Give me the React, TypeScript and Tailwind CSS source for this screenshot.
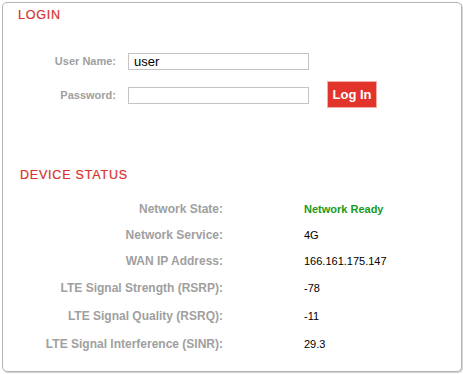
import React from "react";

const rows: { label: string; value: string; green?: boolean; h: number }[] = [
  { label: "Network State:", value: "Network Ready", green: true, h: 26 },
  { label: "Network Service:", value: "4G", h: 26 },
  { label: "WAN IP Address:", value: "166.161.175.147", h: 26 },
  { label: "LTE Signal Strength (RSRP):", value: "-78", h: 28 },
  { label: "LTE Signal Quality (RSRQ):", value: "-11", h: 28 },
  { label: "LTE Signal Interference (SINR):", value: "29.3", h: 28 },
];

export default function App() {
  return (
    <div
      className="w-[463px] h-[374px] bg-white overflow-hidden"
      style={{ fontFamily: '"Liberation Sans", Arial, sans-serif' }}
    >
      <div className="ml-[2px] mt-[2px] w-[460px] h-[370px] border border-[#b4b4b4] rounded-[5px] shadow-[1px_1px_1px_#d0d0d0] bg-white">
        <div className="pl-[15px] pt-[5px] h-[20px] text-[12.5px] leading-[14px] tracking-[0.8px] text-[#d8302a] [-webkit-text-stroke:0.2px_#d8302a]">
          LOGIN
        </div>
        <div className="mt-[30px] flex items-start">
          <div className="flex flex-col">
            <div className="flex items-center h-[17px]">
              <div className="w-[113px] text-right text-[11px] font-bold text-[#a0a0a0]">User Name:</div>
              <div className="ml-[12px] w-[181px] h-[17px] border border-[#c4c4c4] text-[13px] leading-[15px] pl-[5px] text-black">
                user
              </div>
            </div>
            <div className="flex items-center h-[17px] mt-[17px]">
              <div className="w-[113px] text-right text-[11px] font-bold text-[#a0a0a0]">Password:</div>
              <div className="ml-[12px] w-[181px] h-[17px] border border-[#c4c4c4]"></div>
            </div>
          </div>
          <div className="ml-[18px] mt-[28px] w-[50px] h-[27px] bg-[#e3342c] border border-[#f0b0a8] text-white font-bold text-[13px] flex items-center justify-center">
            Log In
          </div>
        </div>
        <div className="mt-[60px] pl-[17px] h-[14px] text-[12.5px] leading-[14px] tracking-[0.8px] text-[#d8302a] [-webkit-text-stroke:0.2px_#d8302a]">
          DEVICE STATUS
        </div>
        <div className="mt-[14px] flex flex-col">
          {rows.map((r) => (
            <div key={r.label} className="flex items-center" style={{ height: r.h }}>
              <div className="w-[220px] text-right text-[12px] font-bold text-[#a0a0a0]">{r.label}</div>
              <div
                className={
                  r.green
                    ? "ml-[81px] text-[11px] font-bold text-[#1a9a1a]"
                    : "ml-[81px] text-[11px] text-black"
                }
              >
                {r.value}
              </div>
            </div>
          ))}
        </div>
      </div>
    </div>
  );
}
